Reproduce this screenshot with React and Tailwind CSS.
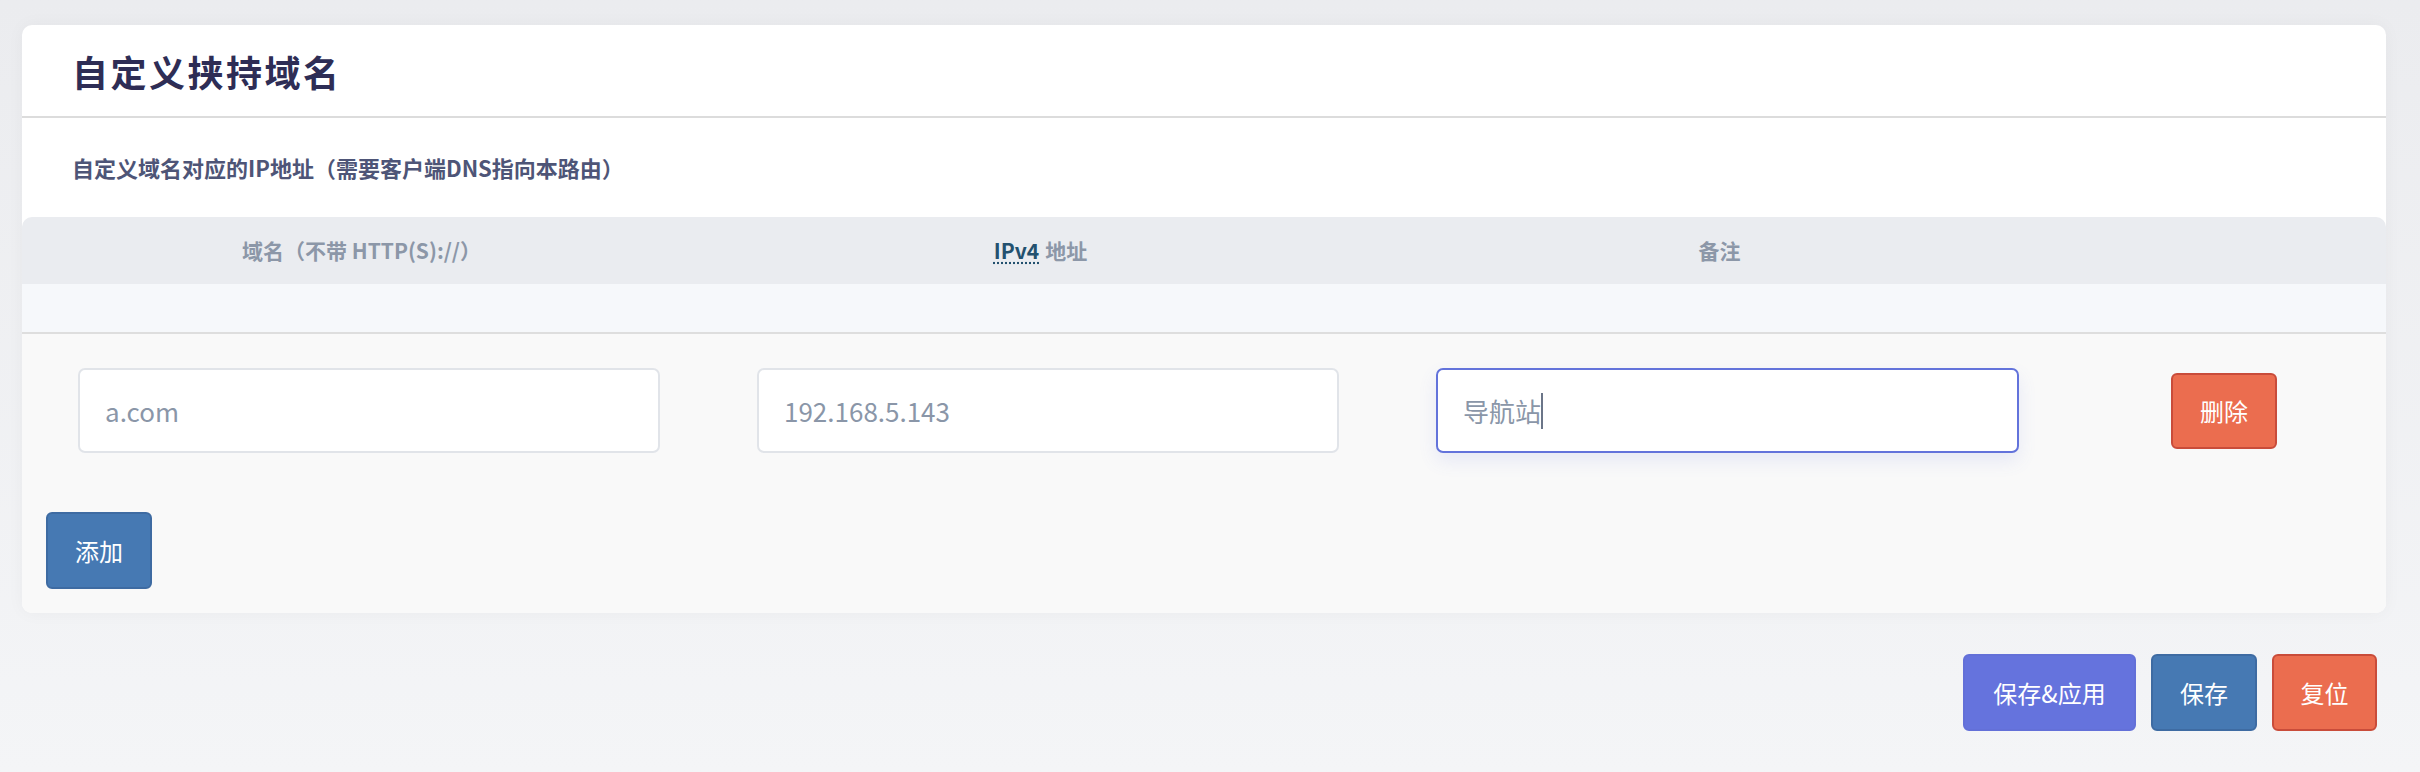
export default function App() {
  const cell = "flex items-center justify-center pr-[16px]";

  return (
    <div className="min-h-screen bg-gradient-to-b from-[#ebecef] to-[#f4f5f7] pt-[25px] pl-[22px] pr-[34px] font-['Noto_Sans_CJK_SC','Noto_Sans',sans-serif]">
      {/* Card */}
      <div className="bg-white rounded-[10px] shadow-[0_0_18px_rgba(0,0,0,0.04)] overflow-hidden">
        <div className="h-[93px] border-b-2 border-[#dcdcdc] flex items-center pl-[50px]">
          <h2 className="text-[36px] font-bold text-[#2e2d55] tracking-[2.5px] leading-none">自定义挟持域名</h2>
        </div>
        <div className="h-[99px] flex items-center pl-[50px]">
          <p className="text-[22px] font-semibold text-[#4e5577]">自定义域名对应的IP地址（需要客户端DNS指向本路由）</p>
        </div>

        {/* Table */}
        <div className="grid grid-cols-[679px_679px_679px_1fr] pl-[8px] h-[67px] bg-[#eaecf0] rounded-t-[10px] text-[21px] font-bold text-[#8c97a8]">
          <div className={cell}>域名（不带 HTTP(S)://）</div>
          <div className={cell}>
            <abbr className="text-[#23516f] underline decoration-dotted underline-offset-4 mr-[6px]" title="Internet Protocol Version 4">IPv4</abbr>
            地址
          </div>
          <div className={cell}>备注</div>
          <div></div>
        </div>
        <div className="h-[50px] bg-[#f6f8fb] border-b-2 border-[#dedede]"></div>

        <div className="bg-[#f9f9f9] pt-[34px] pb-[24px]">
          <div className="grid grid-cols-[679px_679px_679px_1fr] pl-[8px] items-center">
            <div className="pl-[48px]">
              <div className="w-[582px] h-[85px] bg-white border-2 border-[#e1e4e9] rounded-[7px] flex items-center pl-[25px] text-[26px] text-[#8a96a8]">a.com</div>
            </div>
            <div className="pl-[48px]">
              <div className="w-[582px] h-[85px] bg-white border-2 border-[#e1e4e9] rounded-[7px] flex items-center pl-[25px] text-[26px] text-[#8a96a8]">192.168.5.143</div>
            </div>
            <div className="pl-[48px]">
              <div className="w-[583px] h-[85px] bg-white border-2 border-[#6373db] rounded-[7px] flex items-center pl-[25px] text-[26px] text-[#8a96a8] shadow-[0_8px_18px_rgba(99,115,219,0.12)]">
                导航站<span className="inline-block w-[2px] h-[36px] bg-[#6b7588]"></span>
              </div>
            </div>
            <div className="pl-[104px]">
              <button className="w-[106px] h-[76px] rounded-[6px] bg-[#eb6d4f] border-2 border-[#c94c3a] text-white text-[24px]">删除</button>
            </div>
          </div>
          <button className="mt-[59px] ml-[24px] w-[106px] h-[77px] rounded-[6px] bg-[#4679b3] border-2 border-[#3e6ba2] text-white text-[24px]">添加</button>
        </div>
      </div>

      {/* Actions */}
      <div className="flex justify-end gap-[15px] mt-[41px] pr-[9px]">
        <button className="w-[173px] h-[77px] rounded-[6px] bg-[#6573dd] border-2 border-[#6370d8] text-white text-[24px]">保存&amp;应用</button>
        <button className="w-[106px] h-[77px] rounded-[6px] bg-[#4679b3] border-2 border-[#3e6ba2] text-white text-[24px]">保存</button>
        <button className="w-[105px] h-[77px] rounded-[6px] bg-[#eb6d4f] border-2 border-[#c94c3a] text-white text-[24px]">复位</button>
      </div>
    </div>
  );
}
